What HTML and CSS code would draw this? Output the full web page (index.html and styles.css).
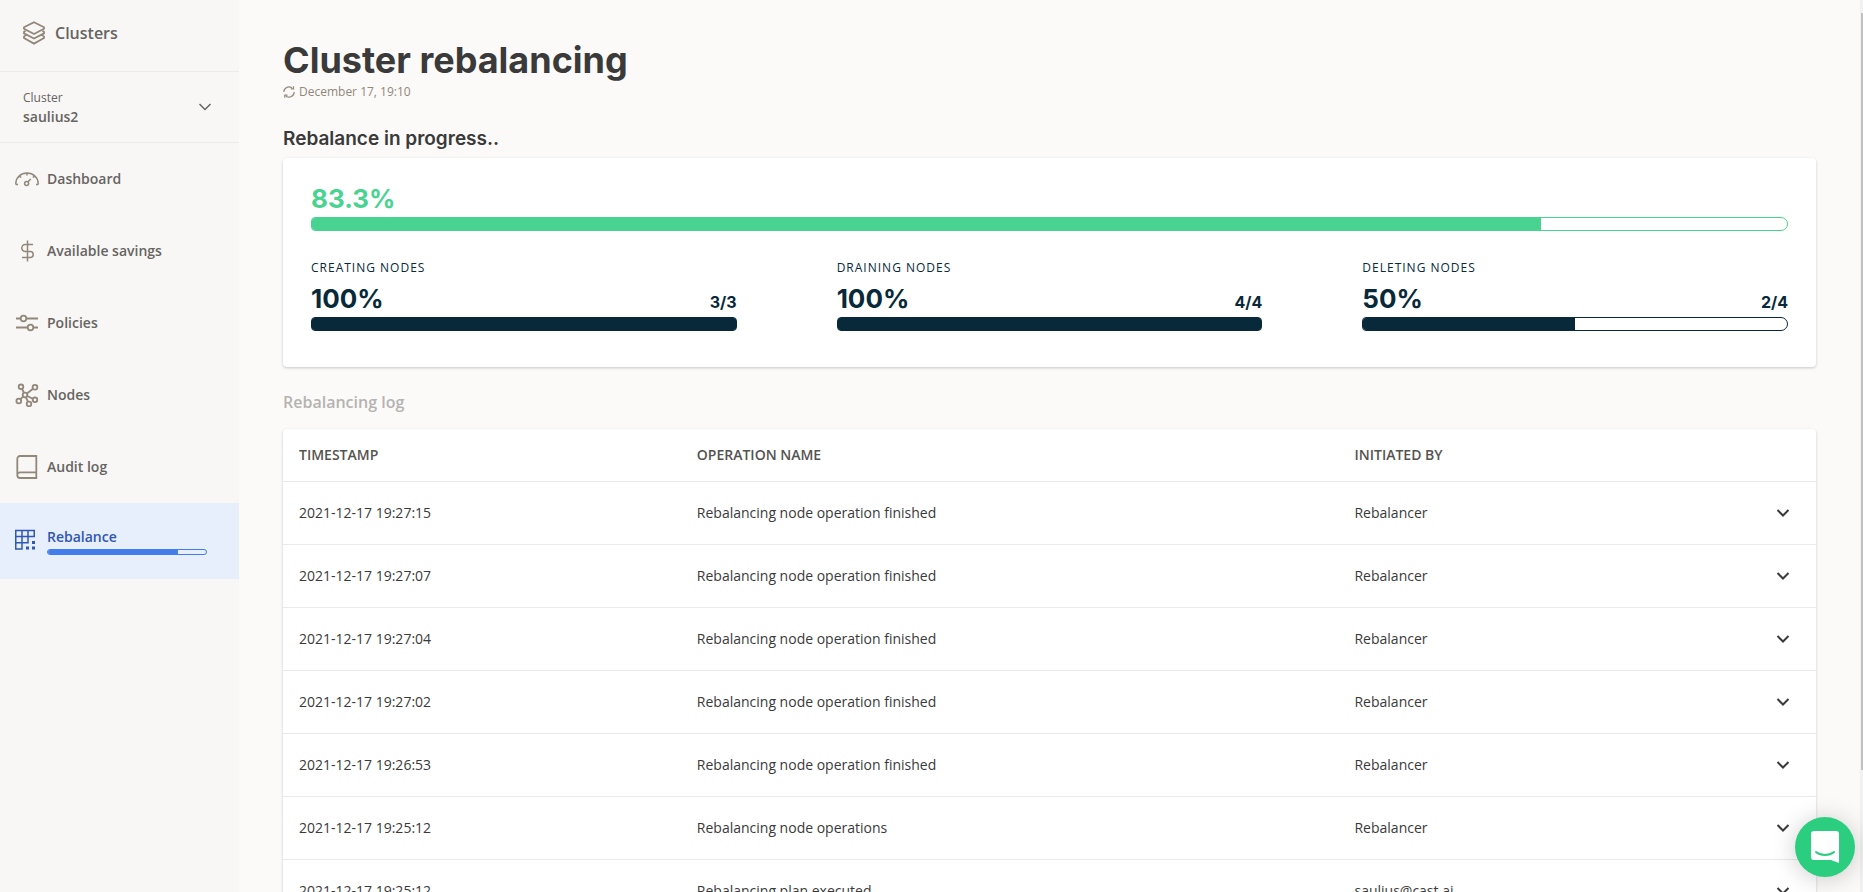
FILE: index.html
```html
<!DOCTYPE html>
<html lang="en">
<head>
<meta charset="utf-8">
<title>Cluster rebalancing</title>
<link rel="stylesheet" href="styles.css">
</head>
<body>
<div class="app">
  <aside class="sidebar">
    <a class="brand" href="#">
      <svg class="icon bold" viewBox="0 0 24 24"><path d="M12 1.200 22 6.200v1.600L12 13 2 7.800V6.200z"/><path d="M3.500 9.800 2 11v1.400l10 5.200 10-5.200V11l-1.500-1.200M3.500 14.400 2 15.600V17l10 5.600L22 17v-1.400l-1.500-1.200"/></svg>
      <span>Clusters</span>
    </a>
    <button class="picker" type="button">
      <span class="picker-text"><span class="picker-label">Cluster</span><span class="picker-name">saulius2</span></span>
      <svg class="picker-arrow" viewBox="0 0 14 14"><path d="M1.500 4 7 9.500 12.500 4"/></svg>
    </button>
    <nav class="menu">
      <a class="item" href="#">
        <svg class="icon" viewBox="0 0 24 24"><path d="M.8 17.500H3M21 17.500h2.200M.8 17.500V16.500a11.200 10.600 0 0 1 22.400 0v1M12 6v2.500M4.700 9.300l1.500 1.200M19.300 9.300l-1.500 1.200M12.800 15l3-3"/><circle cx="11.600" cy="16.500" r="2"/></svg>
        <span>Dashboard</span>
      </a>
      <a class="item" href="#">
        <svg class="icon" viewBox="0 0 24 24"><path d="M12.500 1.500v21M18 5.500H10.300a3.500 3.500 0 0 0 0 7h4.900a3 3 0 0 1 0 6H7"/></svg>
        <span>Available savings</span>
      </a>
      <a class="item" href="#">
        <svg class="icon bold" viewBox="0 0 24 24"><path d="M1 7.500h4.500M11.500 7.500H23M1 16.500h11.500M18.500 16.500H23"/><circle cx="8.500" cy="7.500" r="2.800"/><circle cx="15.500" cy="16.500" r="2.800"/></svg>
        <span>Policies</span>
      </a>
      <a class="item" href="#">
        <svg class="icon bold" viewBox="0 0 24 24"><circle cx="10" cy="12" r="2.300"/><circle cx="6" cy="3.800" r="2.300"/><circle cx="20" cy="4.300" r="2.400"/><circle cx="3.800" cy="18" r="2.400"/><circle cx="20" cy="16.800" r="2.300"/><circle cx="14" cy="21" r="2.300"/><path d="M7 6l2 3.700M12 10.500l6-4.700M8.200 13.700l-2.800 2.500M12.300 13l5.500 2.800M11 14.300l2 4.500"/></svg>
        <span>Nodes</span>
      </a>
      <a class="item" href="#">
        <svg class="icon bold" viewBox="0 0 24 24"><path d="M21.300 17.300V1H5a2.700 2.700 0 0 0-2.700 2.700v16.600A2.700 2.700 0 0 0 5 23h16.300v-5.700H5a2.700 2.700 0 0 0-2.700 2.700"/></svg>
        <span>Audit log</span>
      </a>
      <a class="item active" href="#">
        <svg class="icon" viewBox="0 0 24 24"><path d="M.750 1.500h18.500v6H13v6.250H7V20H.750zM.750 7.500H13v-6M.750 13.750H7V1.500"/><path class="dots" d="M17 12h3v3h-3zM17 17.500h3v3h-3zM11 17.500h3v3h-3z"/></svg>
        <span class="item-body"><span>Rebalance</span><span class="bar bar-mini"><span class="fill" style="width:82%"></span></span></span>
      </a>
    </nav>
  </aside>
  <main class="main">
    <h1 class="title">Cluster rebalancing</h1>
    <p class="updated"><svg viewBox="0 0 12 12"><path d="M11.200 6A5.200 5.200 0 0 1 3 10.200M.800 6A5.200 5.200 0 0 1 9 1.800M10.500.200v2.600H7.800M1.800 11.800V9.200h2.700"/></svg>December 17, 19:10</p>
    <h2 class="subtitle">Rebalance in progress..</h2>
    <section class="card progress">
      <div class="total">83.3%</div>
      <div class="bar bar-green"><span class="fill" style="width:83.3%"></span></div>
      <div class="steps">
        <div class="step"><div class="step-name">CREATING NODES</div><div class="step-row"><span class="pct">100%</span><span class="count">3/3</span></div><div class="bar full"><span class="fill" style="width:100%"></span></div></div>
        <div class="step"><div class="step-name">DRAINING NODES</div><div class="step-row"><span class="pct">100%</span><span class="count">4/4</span></div><div class="bar full"><span class="fill" style="width:100%"></span></div></div>
        <div class="step"><div class="step-name">DELETING NODES</div><div class="step-row"><span class="pct">50%</span><span class="count">2/4</span></div><div class="bar"><span class="fill" style="width:50%"></span></div></div>
      </div>
    </section>
    <h3 class="log-title">Rebalancing log</h3>
    <div class="card">
      <table class="log">
        <colgroup><col class="c-time"><col class="c-op"><col class="c-by"><col class="c-more"></colgroup>
        <thead><tr><th>TIMESTAMP</th><th>OPERATION NAME</th><th>INITIATED BY</th><th></th></tr></thead>
        <tbody>
          <tr><td>2021-12-17 19:27:15</td><td>Rebalancing node operation finished</td><td>Rebalancer</td><td><button class="more" type="button" aria-label="Expand"><svg viewBox="0 0 14 14"><path d="M1.500 4 7 9.500 12.500 4"/></svg></button></td></tr>
          <tr><td>2021-12-17 19:27:07</td><td>Rebalancing node operation finished</td><td>Rebalancer</td><td><button class="more" type="button" aria-label="Expand"><svg viewBox="0 0 14 14"><path d="M1.500 4 7 9.500 12.500 4"/></svg></button></td></tr>
          <tr><td>2021-12-17 19:27:04</td><td>Rebalancing node operation finished</td><td>Rebalancer</td><td><button class="more" type="button" aria-label="Expand"><svg viewBox="0 0 14 14"><path d="M1.500 4 7 9.500 12.500 4"/></svg></button></td></tr>
          <tr><td>2021-12-17 19:27:02</td><td>Rebalancing node operation finished</td><td>Rebalancer</td><td><button class="more" type="button" aria-label="Expand"><svg viewBox="0 0 14 14"><path d="M1.500 4 7 9.500 12.500 4"/></svg></button></td></tr>
          <tr><td>2021-12-17 19:26:53</td><td>Rebalancing node operation finished</td><td>Rebalancer</td><td><button class="more" type="button" aria-label="Expand"><svg viewBox="0 0 14 14"><path d="M1.500 4 7 9.500 12.500 4"/></svg></button></td></tr>
          <tr><td>2021-12-17 19:25:12</td><td>Rebalancing node operations</td><td>Rebalancer</td><td><button class="more" type="button" aria-label="Expand"><svg viewBox="0 0 14 14"><path d="M1.500 4 7 9.500 12.500 4"/></svg></button></td></tr>
          <tr><td>2021-12-17 19:25:12</td><td>Rebalancing plan executed</td><td>saulius@cast.ai</td><td><button class="more" type="button" aria-label="Expand"><svg viewBox="0 0 14 14"><path d="M1.500 4 7 9.500 12.500 4"/></svg></button></td></tr>
        </tbody>
      </table>
    </div>
  </main>
  <div class="scroll"><div class="thumb"></div></div>
</div>
<button class="chat" type="button" aria-label="Open chat"><svg viewBox="0 0 28 32"><path class="bubble" d="M3 0h22a3 3 0 0 1 3 3v29l-8-3H3a3 3 0 0 1-3-3V3a3 3 0 0 1 3-3z"/><path class="smile" d="M5 21c5 4 13 4 18 0"/></svg></button>
</body>
</html>
```
FILE: styles.css
```css
* { box-sizing: border-box; }
body { margin: 0; font-family: "Open Sans", "Noto Sans", sans-serif; font-size: 14px; line-height: 20px; color: #3a3a3a; background: #fbfaf8; }
button { font: inherit; color: inherit; background: none; border: 0; padding: 0; cursor: pointer; }
svg { fill: none; stroke: currentColor; stroke-width: 1.5; flex: none; }
.app { display: flex; height: 100vh; overflow: hidden; }
.sidebar { flex: none; width: 239px; background: #f8f7f5; color: #666462; font-weight: 600; }
.icon { width: 24px; height: 24px; color: #91877b; }
.bold { stroke-width: 1.8; }
.brand { display: flex; align-items: center; gap: 9px; height: 72px; padding: 0 22px 5px; border-bottom: 1px solid #ecebe9; font-size: 16px; color: inherit; text-decoration: none; }
.picker { display: flex; align-items: center; justify-content: space-between; width: 100%; height: 71px; padding: 0 27px 0 23px; border-bottom: 1px solid #ecebe9; text-align: left; }
.picker-text { display: flex; flex-direction: column; padding-top: 2px; }
.picker-label { font-size: 12px; font-weight: 400; line-height: 18px; }
.picker-name { font-weight: 600; }
.picker-arrow { width: 14px; height: 14px; }
.item { display: flex; align-items: center; gap: 8px; height: 72px; padding: 0 15px; color: inherit; text-decoration: none; }
.active { height: 76px; background: #e7eefc; color: #3158b0; }
.active .icon { color: #3158b0; }
.active .dots { fill: currentColor; stroke: none; }
.item-body { display: flex; flex-direction: column; gap: 2px; flex: 1; }
.bar { display: block; height: 14px; border: 1px solid currentColor; border-radius: 7px; border-top-left-radius: 4px; border-bottom-left-radius: 4px; overflow: hidden; color: #07293a; }
.full { border-radius: 4px; }
.fill { display: block; height: 100%; background: currentColor; }
.full .fill { box-shadow: 0 0 0 1px currentColor; }
.bar-mini { width: 160px; height: 6px; border-radius: 3px; color: #437dec; }
.bar-green { color: #49d391; }
.main { flex: 1; min-width: 0; padding: 38px 44px 0; }
.title { margin: 0; font: 700 36px/44px "Inter", sans-serif; color: #3a3a3a; }
.updated { display: flex; align-items: center; gap: 4px; margin: 0; font-size: 12px; color: #91877b; }
.updated svg { width: 12px; height: 12px; stroke-width: 1.2; }
.subtitle { margin: 24px 0 6px; font: 600 19px/26px "Inter", sans-serif; }
.card { background: #fff; border-radius: 4px; box-shadow: 0 1px 3px rgba(0, 0, 0, .2); }
.progress { padding: 24px 28px 36px; color: #07293a; }
.total { font: 700 26px/34px "Inter", sans-serif; color: #49d391; margin-bottom: 1px; }
.steps { display: grid; grid-template-columns: repeat(3, 1fr); gap: 100px; margin-top: 27px; }
.step-name { font-size: 12px; letter-spacing: 1px; }
.step-row { display: flex; justify-content: space-between; align-items: baseline; height: 30px; margin: 6px 0 3px; font-family: "Inter", sans-serif; font-weight: 700; line-height: 30px; }
.pct { font-size: 26px; }
.count { font-size: 16px; }
.log-title { margin: 24px 0 16px; font-size: 16px; line-height: 22px; font-weight: 600; color: #b5b3b1; }
.log { width: 100%; border-collapse: collapse; table-layout: fixed; }
.log th, .log td { padding: 0 16px; text-align: left; border-bottom: 1px solid #e9e9e9; }
.log th { height: 52px; font-weight: 600; color: #555350; }
.log td { height: 63px; }
.c-time { width: 25.95%; }
.c-op { width: 42.9%; }
.c-by { width: 25%; }
.c-more { width: 6.15%; }
.more { display: block; margin-left: auto; margin-right: 10px; width: 14px; height: 14px; }
.more svg { display: block; width: 14px; height: 14px; stroke-width: 2; }
.scroll { flex: none; width: 3px; padding-top: 13px; background: #f1f1f1; }
.thumb { height: 757px; margin-left: 1px; background: #c1c1c1; }
.chat { position: fixed; right: 8px; bottom: 15px; display: grid; place-items: center; width: 60px; height: 60px; border-radius: 50%; background: #2bcd7f; box-shadow: 0 2px 24px rgba(0, 0, 0, .2); }
.chat svg { width: 28px; height: 32px; }
.bubble { fill: #fff; stroke: none; }
.smile { stroke: #2bcd7f; stroke-width: 2; stroke-linecap: round; }
```
